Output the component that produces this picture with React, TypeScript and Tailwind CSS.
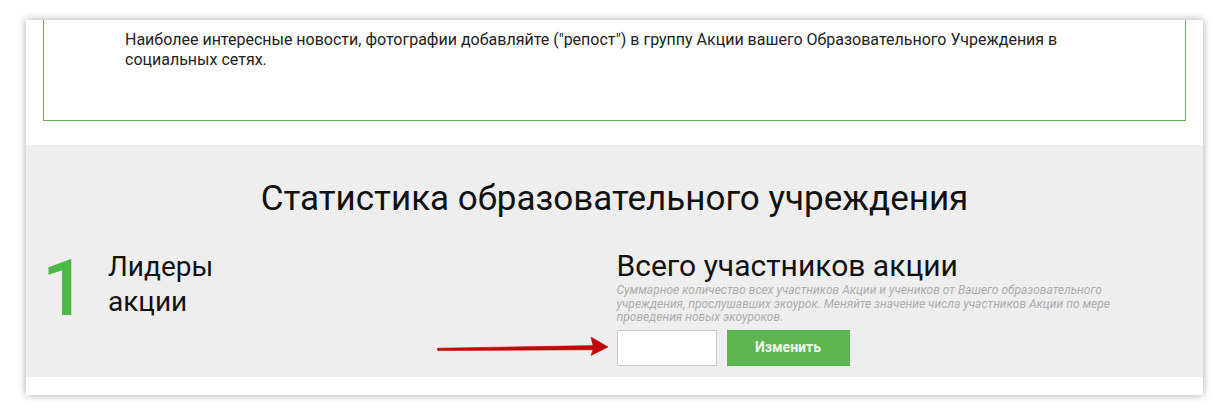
export default function App() {
  return (
    <div
      className="relative h-[420px] w-[1230px] overflow-hidden bg-white pt-[20px]"
      style={{ fontFamily: "Roboto, 'Noto Sans', sans-serif" }}
    >
      <div className="ml-[26px] w-[1177px] bg-white pb-[18px] shadow-[0_0_8px_rgba(0,0,0,0.35)]">
        <div className="mx-[17px] h-[101px] border-x border-b border-[#6aaf57] pl-[81px] pr-[60px] pt-[10px] text-[16px] leading-[20px] text-[#222]">
          Наиболее интересные новости, фотографии добавляйте ("репост") в группу Акции вашего Образовательного
          Учреждения в
          <br />
          социальных сетях.
        </div>

        <div className="mt-[24px] h-[232px] bg-[#eeeeee] pt-[33px]">
          <h2 className="text-center text-[35px] leading-[41px] font-normal text-[#111]">
            Статистика образовательного учреждения
          </h2>

          <div className="mt-[30px] grid grid-cols-2">
            <div className="flex pl-[16px]">
              <div className="mt-[-5px] w-[66px] text-[78px] leading-[90px] font-medium text-[#4cb847]">1</div>
              <div className="text-[28px] leading-[35px] text-[#111]">
                Лидеры
                <br />
                акции
              </div>
            </div>

            <div className="pl-[2px]">
              <div className="text-[30px] leading-[34px] text-[#111]">Всего участников акции</div>
              <p className="mt-[1px] text-[12px] leading-[13.5px] italic text-[#adadad]">
                Суммарное количество всех участников Акции и учеников от Вашего образовательного
                <br />
                учреждения, прослушавших экоурок. Меняйте значение числа участников Акции по мере
                <br />
                проведения новых экоуроков.
              </p>
              <div className="mt-[5px] flex gap-[10px]">
                <input
                  type="text"
                  className="h-[36px] w-[100px] border border-[#c8c8c8] bg-white px-2 text-[14px] outline-none"
                />
                <button className="h-[36px] w-[123px] bg-[#5db551] text-[14px] font-bold text-[#eef7ea]">
                  Изменить
                </button>
              </div>
            </div>
          </div>
        </div>
      </div>

      {/* red annotation arrow */}
      <svg className="absolute left-[436px] top-[336px]" width="174" height="22" viewBox="0 0 174 22">
        <polygon
          points="2,12.2 157,9.6 155,1 172,11 155,19.5 157,13.8 2,14.6"
          fill="#c00b0b"
          stroke="#c00b0b"
          strokeWidth="0.6"
          strokeLinejoin="round"
        />
        <circle cx="2.5" cy="13.4" r="1.3" fill="#c00b0b" />
      </svg>
    </div>
  );
}
